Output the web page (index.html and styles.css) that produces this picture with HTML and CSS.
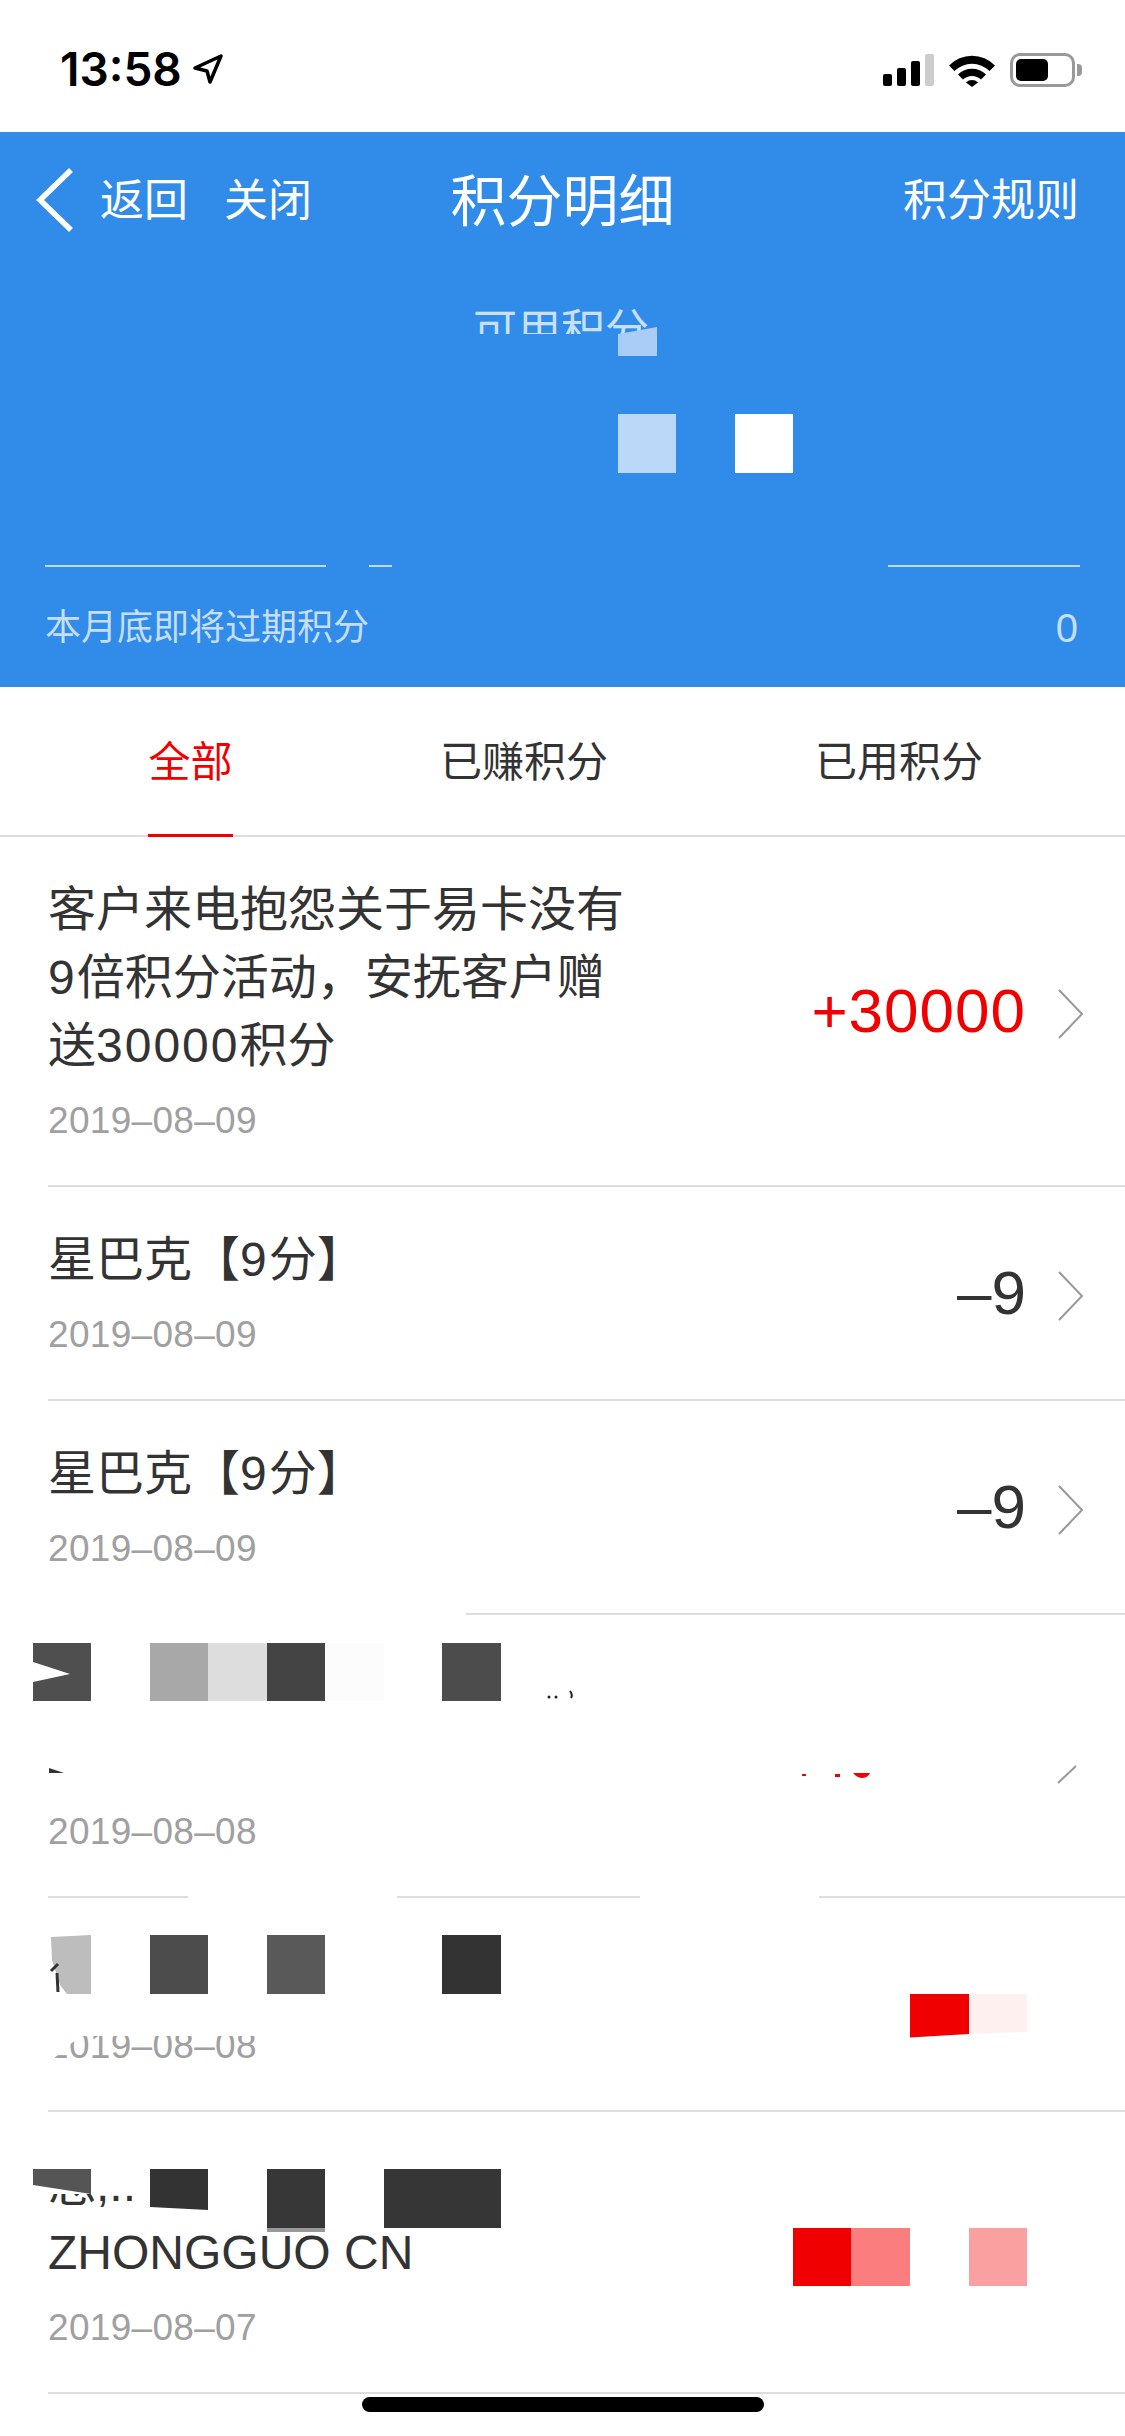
FILE: index.html
```html
<!DOCTYPE html>
<html lang="zh-CN">
<head>
    <meta charset="UTF-8">
    <title>积分明细</title>
    <link rel="stylesheet" href="styles.css">
</head>
<body>
<div class="page">
    <!-- Status bar -->
    <div class="status-bar">
        <div class="status-left">
            <span class="status-time">13:58</span>
            <svg class="status-arrow" width="30" height="31" viewBox="0 0 30 31">
                <path d="M2 14 L28 2 L17 28 L14 17 Z" fill="none" stroke="#000" stroke-width="3.5" stroke-linejoin="round"/>
            </svg>
        </div>
        <div class="status-right">
            <div class="signal">
                <span class="bar bar-1"></span>
                <span class="bar bar-2"></span>
                <span class="bar bar-3"></span>
                <span class="bar bar-4"></span>
            </div>
            <svg class="wifi" width="46" height="33" viewBox="0 0 46 33">
                <path d="M0 11.5 A32 32 0 0 1 46 11.5 L40.5 17 A25 25 0 0 0 5.5 17 Z" fill="#000"/>
                <path d="M9 20.5 A20 20 0 0 1 37 20.5 L32 25.5 A13 13 0 0 0 14 25.5 Z" fill="#000"/>
                <path d="M17 28.5 A8.5 8.5 0 0 1 29 28.5 L23 33 Z" fill="#000"/>
            </svg>
            <div class="battery">
                <div class="battery-body"><span class="battery-level"></span></div>
                <span class="battery-cap"></span>
            </div>
        </div>
    </div>

    <!-- Blue header -->
    <div class="header">
        <div class="nav">
            <div class="nav-left">
                <svg class="nav-back" width="37" height="64" viewBox="0 0 37 64">
                    <path d="M35 2 L4 32 L35 62" fill="none" stroke="#fff" stroke-width="5.5"/>
                </svg>
                <span>返回</span>
                <span>关闭</span>
            </div>
            <div class="nav-title">积分明细</div>
            <div class="nav-right">积分规则</div>
        </div>
        <div class="points-label">可用积分</div>
        <div class="points-value"></div>
        <div class="rule-row">
            <span class="rule rule-a"></span>
            <span class="rule rule-b"></span>
            <span class="rule rule-c"></span>
        </div>
        <div class="expire-row">
            <span>本月底即将过期积分</span>
            <span class="expire-value">0</span>
        </div>
    </div>

    <!-- Tabs -->
    <div class="tabs">
        <div class="tab tab-active">全部</div>
        <div class="tab">已赚积分</div>
        <div class="tab">已用积分</div>
    </div>

    <!-- Points list -->
    <div class="list">
        <div class="row">
            <div class="row-info">
                <div class="row-title">客户来电抱怨关于易卡没有<span class="num">9</span>倍积分活动，安抚客户赠送<span class="num">30000</span>积分</div>
                <div class="row-date">2019–08–09</div>
            </div>
            <div class="row-amount amount-plus">+30000</div>
            <svg class="row-chevron" width="26" height="50" viewBox="0 0 26 50">
                <path d="M1 1 L24 25 L1 49" fill="none" stroke="#999" stroke-width="2"/>
            </svg>
        </div>
        <div class="row">
            <div class="row-info">
                <div class="row-title">星巴克【<span class="num">9</span>分】</div>
                <div class="row-date">2019–08–09</div>
            </div>
            <div class="row-amount">–9</div>
            <svg class="row-chevron" width="26" height="50" viewBox="0 0 26 50">
                <path d="M1 1 L24 25 L1 49" fill="none" stroke="#999" stroke-width="2"/>
            </svg>
        </div>
        <div class="row">
            <div class="row-info">
                <div class="row-title">星巴克【<span class="num">9</span>分】</div>
                <div class="row-date">2019–08–09</div>
            </div>
            <div class="row-amount">–9</div>
            <svg class="row-chevron" width="26" height="50" viewBox="0 0 26 50">
                <path d="M1 1 L24 25 L1 49" fill="none" stroke="#999" stroke-width="2"/>
            </svg>
        </div>
        <div class="row">
            <div class="row-info">
                <div class="row-title title-blank-2"></div>
                <div class="row-date">2019–08–08</div>
            </div>
        </div>
        <div class="row">
            <div class="row-info">
                <div class="row-title title-blank-1"></div>
                <div class="row-date">2019–08–08</div>
            </div>
        </div>
        <div class="row">
            <div class="row-info">
                <div class="row-title">总,..<br>ZHONGGUO CN</div>
                <div class="row-date">2019–08–07</div>
            </div>
        </div>
    </div>

    <div class="home-bar"></div>

    <!-- Mosaic and white-out over the screenshot -->
    <svg class="mask-layer" width="1125" height="2436" viewBox="0 0 1125 2436">
        <!-- header -->
        <rect x="470" y="334" width="190" height="24" fill="#318be9"/>
        <polygon points="618,334 657,327 657,356 618,356" fill="#a9cdf7"/>
        <rect x="618" y="414" width="58" height="59" fill="#bcd8f9"/>
        <rect x="735" y="414" width="58" height="59" fill="#fff"/>

        <!-- white-out on separators -->
        <rect x="0" y="1610" width="466" height="10" fill="#fff"/>
        <rect x="188" y="1892" width="209" height="10" fill="#fff"/>
        <rect x="640" y="1892" width="179" height="10" fill="#fff"/>

        <!-- row 4 -->
        <polygon points="33,1643 91,1643 91,1701 33,1701 33,1682 70,1674 33,1662" fill="#4f4f4f"/>
        <rect x="150" y="1643" width="58" height="58" fill="#a8a8a8"/>
        <rect x="208" y="1643" width="59" height="58" fill="#dddddd"/>
        <rect x="267" y="1643" width="58" height="58" fill="#444444"/>
        <rect x="325" y="1643" width="59" height="58" fill="#fcfcfc"/>
        <rect x="442" y="1643" width="59" height="58" fill="#4c4c4c"/>
        <circle cx="549" cy="1697" r="1.5" fill="#222"/>
        <circle cx="556" cy="1697" r="1.5" fill="#222"/>
        <path d="M570 1691 Q573 1695 571 1698" fill="none" stroke="#222" stroke-width="2"/>
        <polygon points="49,1768 64,1773 49,1773" fill="#333"/>
        <rect x="802" y="1774" width="4" height="2" fill="#f00000"/>
        <rect x="835" y="1774" width="5" height="3" fill="#f00000"/>
        <path d="M853 1773 L870 1773 Q868 1778 861 1778 Q856 1777 853 1773 Z" fill="#f00000"/>
        <line x1="1058" y1="1783" x2="1076" y2="1766" stroke="#999" stroke-width="2"/>

        <!-- row 5 -->
        <polygon points="51,1937 91,1935 91,1994 67,1994 60,1985 52,1960" fill="#bdbdbd"/>
        <path d="M58 1964 L51 1971" fill="none" stroke="#333" stroke-width="3"/>
        <path d="M57 1973 L58 1992" fill="none" stroke="#333" stroke-width="3"/>
        <rect x="150" y="1935" width="58" height="59" fill="#4c4c4c"/>
        <rect x="267" y="1935" width="58" height="59" fill="#595959"/>
        <rect x="442" y="1935" width="59" height="59" fill="#333333"/>
        <polygon points="910,1994 969,1994 969,2034 910,2037.5" fill="#f00000"/>
        <polygon points="969,1994 1027,1994 1027,2032 969,2034" fill="#fff0f0"/>
        <polygon points="33,2000 420,2000 420,2036 80,2036 52,2060 33,2062" fill="#fff"/>

        <!-- row 6 -->
        <rect x="40" y="2150" width="120" height="44" fill="#fff"/>
        <polygon points="33,2169 91,2169 91,2194 33,2185" fill="#555555"/>
        <polygon points="150,2169 208,2169 208,2210 150,2207" fill="#333333"/>
        <rect x="267" y="2169" width="58" height="59" fill="#373737"/>
        <rect x="267" y="2228" width="58" height="4" fill="#999999"/>
        <rect x="384" y="2169" width="117" height="59" fill="#363636"/>
        <rect x="793" y="2228" width="58" height="58" fill="#f00000"/>
        <rect x="851" y="2228" width="59" height="58" fill="#fb7d7d"/>
        <rect x="969" y="2228" width="58" height="58" fill="#fba0a0"/>
    </svg>
</div>
</body>
</html>
```

FILE: styles.css
```css
html, body {
    margin: 0;
    padding: 0;
}
body {
    background: #fff;
    color: #333;
    font-family: "Liberation Sans", "Noto Sans CJK SC", sans-serif;
}
.page {
    position: relative;
    width: 1125px;
    height: 2436px;
    overflow: hidden;
    background: #fff;
}

/* Status bar */
.status-bar {
    height: 132px;
    display: flex;
    justify-content: space-between;
    align-items: flex-start;
    box-sizing: border-box;
    padding: 53px 43px 0 60px;
}
.status-left {
    display: flex;
    align-items: center;
    gap: 11px;
}
.status-time {
    font-family: Inter, sans-serif;
    font-weight: 600;
    font-size: 46px;
    line-height: 32px;
    color: #000;
}
.status-right {
    display: flex;
    align-items: center;
    gap: 15px;
}
.signal {
    display: flex;
    align-items: flex-end;
    gap: 5px;
    height: 32px;
}
.bar {
    width: 9px;
    border-radius: 2px;
    background: #000;
}
.bar-1 { height: 12px; }
.bar-2 { height: 18px; }
.bar-3 { height: 25px; }
.bar-4 { height: 32px; background: #ccc; }
.battery {
    display: flex;
    align-items: center;
    gap: 2px;
}
.battery-body {
    width: 65px;
    height: 34px;
    box-sizing: border-box;
    border: 3px solid #999;
    border-radius: 10px;
    padding: 3px;
}
.battery-level {
    display: block;
    width: 32px;
    height: 22px;
    background: #000;
    border-radius: 5px;
}
.battery-cap {
    width: 5px;
    height: 12px;
    background: #999;
    border-radius: 0 4px 4px 0;
}

/* Header */
.header {
    background: #318be9;
    color: #fff;
    height: 555px;
}
.nav {
    height: 130px;
    display: grid;
    grid-template-columns: 1fr auto 1fr;
    align-items: center;
    font-size: 44px;
}
.nav-left {
    display: flex;
    align-items: center;
    gap: 36px;
    padding-left: 36px;
}
.nav-back {
    margin-top: 6px;
    margin-right: -9px;
}
.nav-title {
    font-size: 56px;
    margin-top: -2px;
}
.nav-right {
    text-align: right;
    padding-right: 46px;
}
.points-label {
    margin-top: 39px;
    margin-left: 473px;
    font-size: 44px;
    line-height: 60px;
    color: #c9e0fb;
}
.points-value {
    height: 204px;
}
.rule-row {
    display: flex;
    height: 2px;
    padding-left: 45px;
}
.rule {
    height: 2px;
    background: #c0dbf8;
}
.rule-a { width: 281px; }
.rule-b { width: 23px; margin-left: 43px; }
.rule-c { width: 192px; margin-left: 496px; }
.expire-row {
    display: flex;
    justify-content: space-between;
    margin-top: 36px;
    padding: 0 47px 0 45px;
    font-size: 36px;
    line-height: 50px;
    color: #c5def9;
}
.expire-value {
    font-size: 40px;
}

/* Tabs */
.tabs {
    height: 150px;
    box-sizing: border-box;
    border-bottom: 2px solid #ddd;
    display: flex;
    justify-content: space-between;
    padding: 0 142px 0 148px;
    font-size: 42px;
}
.tab {
    height: 150px;
    box-sizing: border-box;
    line-height: 152px;
    color: #333;
}
.tab-active {
    color: #f00000;
    border-bottom: 3px solid #f00000;
    width: 85px;
    text-align: center;
    white-space: nowrap;
}

/* List */
.list {
    margin-left: 48px;
}
.row {
    display: flex;
    align-items: center;
    box-sizing: border-box;
    border-bottom: 2px solid #ddd;
    padding: 39px 41px 39px 0;
}
.row-info {
    width: 580px;
    margin-right: auto;
}
.row-title {
    font-size: 48px;
    line-height: 68px;
    color: #333;
}
.row-title .num {
    letter-spacing: 2px;
}
.title-blank-1 { height: 68px; }
.title-blank-2 { height: 137px; }
.row-date {
    margin-top: 16px;
    font-size: 37px;
    line-height: 50px;
    letter-spacing: 0.3px;
    color: #a0a0a0;
}
.row-amount {
    font-size: 62px;
    line-height: 70px;
    color: #333;
}
.amount-plus {
    color: #f00000;
    letter-spacing: 1px;
}
.row-chevron {
    margin-left: 32px;
    margin-top: 6px;
}

.home-bar {
    position: absolute;
    left: 362px;
    top: 2397px;
    width: 402px;
    height: 15px;
    border-radius: 8px;
    background: #000;
}
.mask-layer {
    position: absolute;
    left: 0;
    top: 0;
}
```
